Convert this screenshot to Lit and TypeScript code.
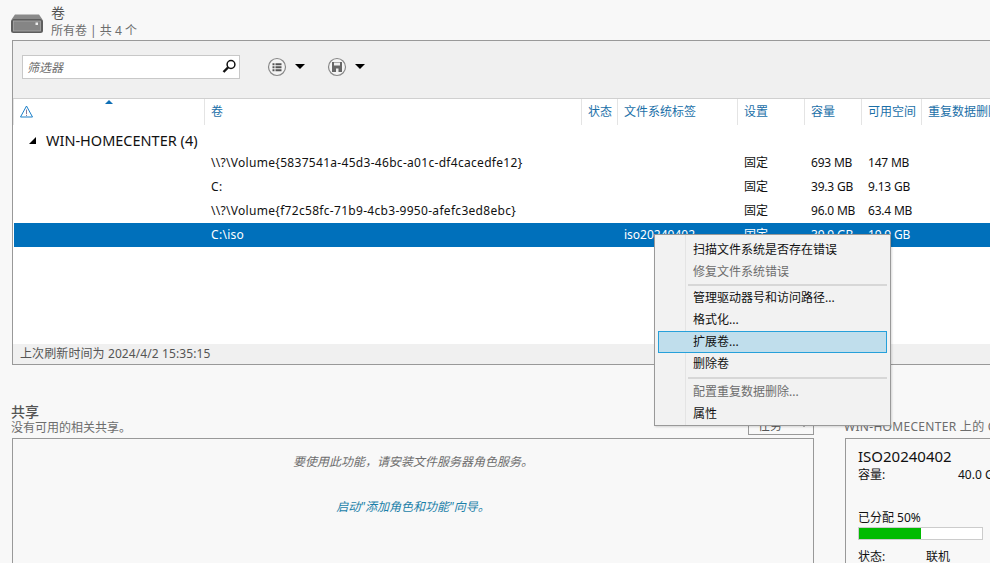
import { LitElement, html, css } from 'lit';
import { customElement } from 'lit/decorators.js';

const rows = [
  { name: '\\\\?\\Volume{5837541a-45d3-46bc-a01c-df4cacedfe12}', label: '', kind: '固定', size: '693 MB', free: '147 MB' },
  { name: 'C:', label: '', kind: '固定', size: '39.3 GB', free: '9.13 GB' },
  { name: '\\\\?\\Volume{f72c58fc-71b9-4cb3-9950-afefc3ed8ebc}', label: '', kind: '固定', size: '96.0 MB', free: '63.4 MB' },
  { name: 'C:\\iso', label: 'iso20240402', kind: '固定', size: '39.9 GB', free: '19.9 GB', selected: true },
];

const columns = ['', '卷', '状态', '文件系统标签', '设置', '容量', '可用空间', '重复数据删除率'];

@customElement('app-root')
export class AppRoot extends LitElement {
  static styles = css`
    :host {
      display: block;
      position: relative;
      width: 990px;
      height: 563px;
      overflow: hidden;
      background: #f8f8f8;
      color: #000;
      font-family: 'Noto Sans', 'Noto Sans CJK SC', sans-serif;
      font-size: 12px;
    }
    .head {
      display: flex;
      height: 40px;
      padding: 14px 0 0 11px;
      box-sizing: border-box;
      position: relative;
    }
    .head svg {
      width: 32px;
      height: 19px;
      margin-right: 8px;
    }
    .titles {
      margin-top: -11px;
    }
    .title {
      color: #555;
      font-size: 14px;
      line-height: 20px;
    }
    .sub {
      color: #6d6d6d;
      line-height: 16px;
    }
    .panel {
      width: 1000px;
      height: 325px;
      margin-left: 12px;
      border: 1px solid #999;
      box-sizing: border-box;
      background: #fff;
      display: flex;
      flex-direction: column;
    }
    .toolbar {
      height: 58px;
      flex: none;
      display: flex;
      align-items: center;
      padding: 0 0 6px 9px;
      box-sizing: border-box;
      background: #f0f0f0;
      border-bottom: 1px solid #d0d0d0;
    }
    .search {
      width: 218px;
      height: 24px;
      box-sizing: border-box;
      border: 1px solid #c8c8c8;
      background: #fff;
      display: flex;
      align-items: center;
      justify-content: space-between;
      padding: 0 2px 0 4px;
      margin-right: 27px;
      font-style: italic;
      color: #6d6d6d;
    }
    .search svg {
      width: 15px;
      height: 15px;
    }
    .tool {
      display: flex;
      align-items: center;
      width: 60px;
    }
    .tool svg.round {
      width: 20px;
      height: 20px;
    }
    .caret {
      width: 0;
      height: 0;
      margin-left: 8px;
      border-left: 5px solid transparent;
      border-right: 5px solid transparent;
      border-top: 5px solid #000;
    }
    .cols {
      display: grid;
      grid-template-columns: 191px 377px 36px 120px 67px 57px 60px 1fr;
    }
    .thead {
      height: 24px;
      flex: none;
      position: relative;
      color: #1a6fa8;
    }
    .thead > div {
      padding: 4px 0 0 6px;
      line-height: 18px;
      height: 22px;
      border-left: 1px solid #e4e4e4;
      white-space: nowrap;
      overflow: hidden;
    }
    .thead > div:first-child {
      border-left: 0;
      padding-left: 8px;
    }
    .thead svg {
      width: 13px;
      height: 13px;
      margin-top: 2px;
      display: block;
    }
    .sort {
      position: absolute;
      left: 92px;
      top: 1px;
      width: 0;
      height: 0;
      border-left: 4px solid transparent;
      border-right: 4px solid transparent;
      border-bottom: 4px solid #0f6fb5;
    }
    .group {
      height: 28px;
      flex: none;
      display: flex;
      align-items: center;
      padding-left: 16px;
      font-size: 14.5px;
      color: #111;
      padding-top: 6px;
      box-sizing: border-box;
    }
    .group svg {
      width: 7px;
      height: 7px;
      margin-right: 10px;
    }
    .row {
      height: 24px;
      flex: none;
      line-height: 24px;
      color: #111;
      margin-left: 1px;
      grid-template-columns: 190px 377px 36px 120px 67px 57px 60px 1fr;
    }
    .row > div {
      padding-left: 7px;
      white-space: nowrap;
    }
    .row .name {
      letter-spacing: 0.3px;
    }
    .row .size {
      letter-spacing: -0.2px;
    }
    .row.selected {
      background: #0070bb;
      color: #fff;
    }
    .spacer {
      flex: 1;
    }
    .status {
      height: 20px;
      flex: none;
      background: #f0f0f0;
      color: #555;
      line-height: 20px;
      padding-left: 7px;
      letter-spacing: 0.1px;
    }
    .lower {
      display: flex;
      padding: 39px 0 0 11px;
    }
    .left {
      width: 803px;
      flex: none;
    }
    .section-head {
      display: flex;
      justify-content: space-between;
      align-items: flex-end;
      height: 31px;
    }
    .section-title {
      font-weight: 500;
      font-size: 14px;
      color: #555;
      line-height: 16px;
    }
    .section-sub {
      color: #6d6d6d;
      line-height: 16px;
      margin-bottom: -1px;
    }
    .task {
      width: 66px;
      height: 20px;
      box-sizing: border-box;
      border: 1px solid #999;
      display: flex;
      justify-content: space-between;
      align-items: center;
      padding: 0 6px 0 9px;
      color: #555;
    }
    .task i {
      width: 0;
      height: 0;
      border-left: 3px solid transparent;
      border-right: 3px solid transparent;
      border-top: 4px solid #444;
    }
    .share-box {
      margin-left: 1px;
      margin-top: 3px;
      height: 160px;
      border: 1px solid #999;
      box-sizing: border-box;
      text-align: center;
      font-style: italic;
      color: #6d6d6d;
      padding-top: 14px;
      line-height: 18px;
    }
    .share-box a {
      display: block;
      margin-top: 27px;
      color: #1a7fa8;
    }
    .right {
      margin-left: 30px;
      width: 300px;
      flex: none;
    }
    .right .section-head {
      color: #6d6d6d;
      white-space: nowrap;
      letter-spacing: 0.3px;
    }
    .card {
      margin-top: 3px;
      margin-left: 1px;
      height: 160px;
      border: 1px solid #999;
      box-sizing: border-box;
      padding: 8px 12px;
      color: #111;
    }
    .card h3 {
      margin: 0;
      font-weight: 400;
      font-size: 15px;
      line-height: 19px;
    }
    .kv {
      display: flex;
      line-height: 18px;
    }
    .kv span:first-child {
      width: 100px;
    }
    .alloc {
      margin-top: 24px;
      line-height: 19px;
    }
    .bar {
      width: 125px;
      height: 13px;
      box-sizing: border-box;
      border: 1px solid #ccc;
      background: #fff;
      margin-bottom: 8px;
    }
    .bar div {
      height: 100%;
      background: #00bb00;
    }
    .status-kv span:first-child {
      width: 68px;
    }
    .menu {
      position: absolute;
      left: 654px;
      top: 234px;
      width: 237px;
      height: 192px;
      box-sizing: border-box;
      border: 1px solid #999;
      padding: 4px 3px 0 3px;
      background: linear-gradient(90deg, #f2f2f2 30px, #e4e4e4 30px, #e4e4e4 31px, #f2f2f2 31px);
      color: #111;
      box-shadow: 1px 1px 2px rgba(0, 0, 0, 0.15);
    }
    .item {
      height: 22px;
      line-height: 21px;
      padding-left: 35px;
      box-sizing: border-box;
    }
    .item.off {
      color: #6d6d6d;
    }
    .item.hot {
      background: #c0deec;
      outline: 1px solid #26a0da;
      outline-offset: -1px;
    }
    .sep {
      height: 2px;
      margin: 1px 0 1px 30px;
      background: #d7d7d7;
    }
    .sep.wide {
      margin: 2px 0 2px 30px;
    }
  `;

  render() {
    return html`
      <div class="head">
        <svg viewBox="0 0 32 19">
          <path d="M4 0.5h24l3.5 5H0.5z" fill="#8a8a8a" />
          <rect x="0" y="5" width="32" height="14" rx="2.5" fill="#5e5e5e" />
          <rect x="2.5" y="7" width="27" height="10" fill="#858585" stroke="#a8a8a8" stroke-width="0.8" />
          <rect x="24.5" y="8.5" width="2.5" height="2.5" fill="#eee" />
        </svg>
        <div class="titles">
          <div class="title">卷</div>
          <div class="sub">所有卷 | 共 4 个</div>
        </div>
      </div>
      <div class="panel">
        <div class="toolbar">
          <div class="search">
            <span>筛选器</span>
            <svg viewBox="0 0 15 15" fill="none" stroke="#111">
              <circle cx="9" cy="5.5" r="3.9" stroke-width="1.5" />
              <path d="M6 8.5L1.5 13" stroke-width="2.4" />
            </svg>
          </div>
          <div class="tool">
            <svg class="round" viewBox="0 0 20 20">
              <circle cx="10" cy="10" r="8.5" fill="#f4f4f4" stroke="#888" stroke-width="1.2" />
              <path d="M5.5 6.2h2v2h-2zM8.5 6.2h6v2h-6zM5.5 9.2h2v2h-2zM8.5 9.2h6v2h-6zM5.5 12.2h2v2h-2zM8.5 12.2h6v2h-6z" fill="#555" />
            </svg>
            <div class="caret"></div>
          </div>
          <div class="tool">
            <svg class="round" viewBox="0 0 20 20">
              <circle cx="10" cy="10" r="8.5" fill="#f4f4f4" stroke="#888" stroke-width="1.2" />
              <path d="M5 5h10v10H5z" fill="#666" />
              <path d="M7 5.5h6v3H7zM9 11.5h2.5V15H9z" fill="#eee" />
            </svg>
            <div class="caret"></div>
          </div>
        </div>
        <div class="thead cols">
          <span class="sort"></span>
          ${columns.map((c, i) =>
            i === 0
              ? html`<div>
                  <svg viewBox="0 0 13 13" fill="none" stroke="#1a7fc8">
                    <path d="M6.5 1L12.5 12H0.5z" />
                    <path d="M6.5 4.5v4.5M6.5 9.8v1.2" stroke="#7a6a90" stroke-width="0.9" />
                  </svg>
                </div>`
              : html`<div>${c}</div>`
          )}
        </div>
        <div class="group">
          <svg viewBox="0 0 7 7"><path d="M7 0V7H0z" fill="#000" /></svg>WIN-HOMECENTER (4)
        </div>
        ${rows.map(
          (r) => html`<div class="row cols ${r.selected ? 'selected' : ''}">
            <div></div>
            <div class="name">${r.name}</div>
            <div></div>
            <div>${r.label}</div>
            <div>${r.kind}</div>
            <div class="size">${r.size}</div>
            <div class="size">${r.free}</div>
            <div></div>
          </div>`
        )}
        <div class="spacer"></div>
        <div class="status">上次刷新时间为 2024/4/2 15:35:15</div>
      </div>
      <div class="lower">
        <div class="left">
          <div class="section-head">
            <div>
              <div class="section-title">共享</div>
              <div class="section-sub">没有可用的相关共享。</div>
            </div>
            <div class="task">任务<i></i></div>
          </div>
          <div class="share-box">
            要使用此功能，请安装文件服务器角色服务。
            <a>启动"添加角色和功能"向导。</a>
          </div>
        </div>
        <div class="right">
          <div class="section-head">WIN-HOMECENTER 上的 C:\\iso</div>
          <div class="card">
            <h3>ISO20240402</h3>
            <div class="kv"><span>容量:</span><span>40.0 GB</span></div>
            <div class="alloc">已分配 50%</div>
            <div class="bar"><div style="width: 50%"></div></div>
            <div class="kv status-kv"><span>状态:</span><span>联机</span></div>
          </div>
        </div>
      </div>
      <div class="menu">
        <div class="item">扫描文件系统是否存在错误</div>
        <div class="item off">修复文件系统错误</div>
        <div class="sep"></div>
        <div class="item">管理驱动器号和访问路径...</div>
        <div class="item">格式化...</div>
        <div class="item hot">扩展卷...</div>
        <div class="item">删除卷</div>
        <div class="sep wide"></div>
        <div class="item off">配置重复数据删除...</div>
        <div class="item">属性</div>
      </div>
    `;
  }
}
